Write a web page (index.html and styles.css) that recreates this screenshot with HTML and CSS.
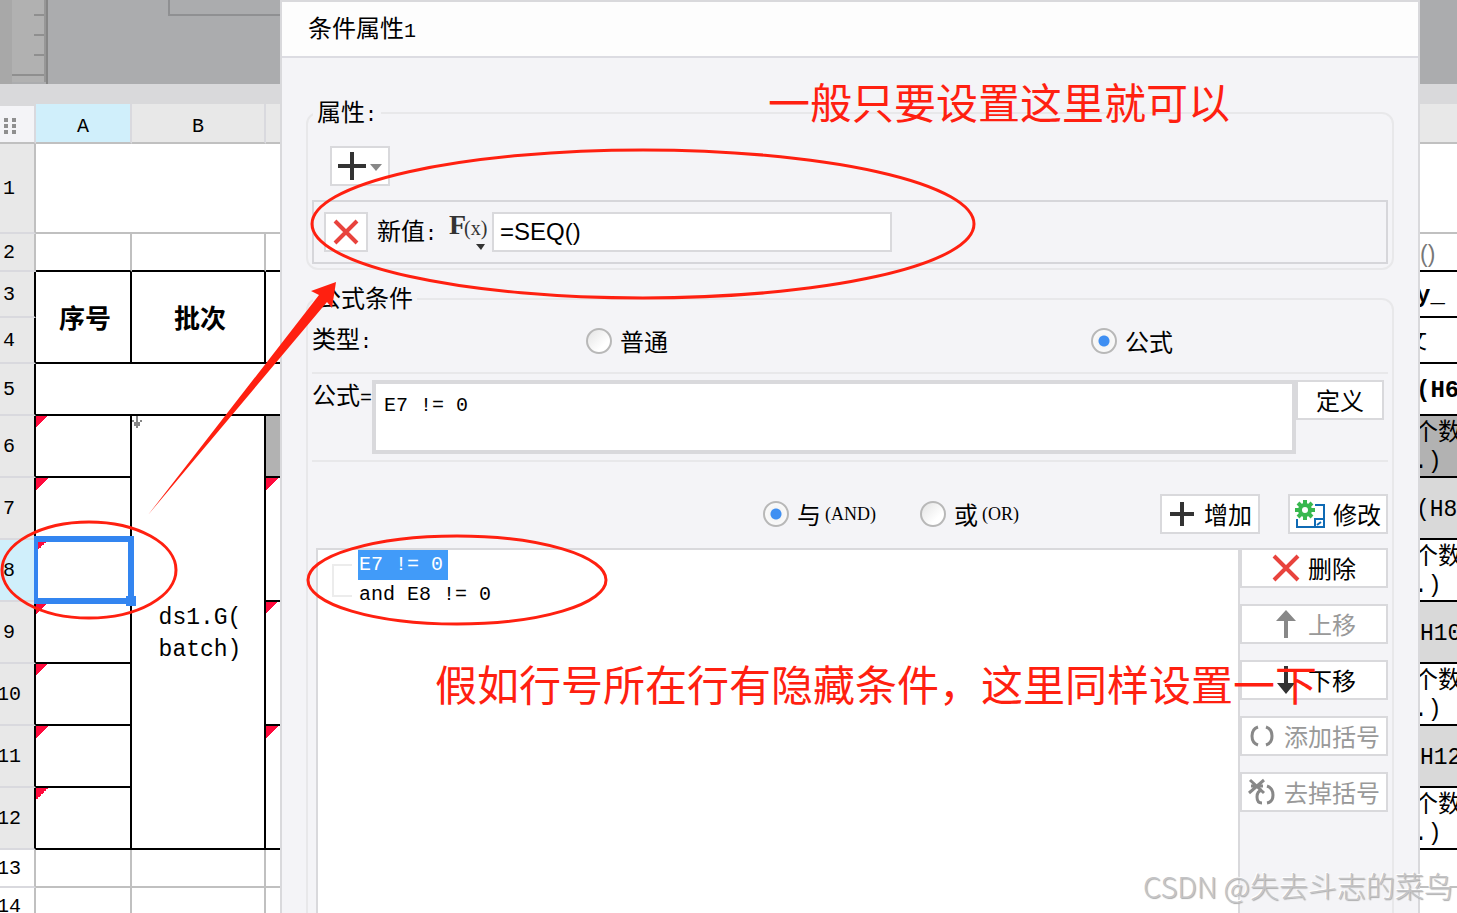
FILE: index.html
```html
<!DOCTYPE html>
<html lang="zh-CN">
<head>
    <meta charset="UTF-8">
    <meta name="viewport" content="width=device-width, initial-scale=1.0">
    <title>条件属性</title>
    <link rel="stylesheet" href="styles.css">
</head>
<body>
    <div class="workspace">
        <!-- Left part of the sheet -->
        <div class="sheet sheet-left">
            <div class="sheet-toolbar">
                <svg width="280" height="84" viewBox="0 0 280 84">
                    <rect x="0" y="0" width="12" height="84" fill="#a8a8a8"/>
                    <rect x="12" y="0" width="32" height="82" fill="#b1b1b1"/>
                    <rect x="44" y="0" width="2" height="82" fill="#979797"/>
                    <rect x="46" y="0" width="2" height="84" fill="#868686"/>
                    <path d="M34 15h10M34 35h10M34 55h10M12 75h32" stroke="#8f8f8f" stroke-width="2"/>
                    <path d="M169 0v15h111" fill="none" stroke="#8f9092" stroke-width="2"/>
                </svg>
            </div>
            <div class="sheet-band"></div>
            <table class="grid grid-left">
                <colgroup>
                    <col class="col-num">
                    <col class="col-a">
                    <col class="col-b">
                    <col class="col-c">
                </colgroup>
                <thead>
                    <tr class="row-head">
                        <th class="corner">
                            <svg width="12" height="16" viewBox="0 0 12 16" fill="#8f8f8f">
                                <path d="M0 0h4v4H0zM8 0h4v4H8zM0 6h4v4H0zM8 6h4v4H8zM0 12h4v4H0zM8 12h4v4H8z"/>
                            </svg>
                        </th>
                        <th class="active">A</th>
                        <th>B</th>
                        <th></th>
                    </tr>
                </thead>
                <tbody>
                    <tr class="row-title"><th>1</th><td colspan="3"></td></tr>
                    <tr class="row-slim above-frame"><th>2</th><td></td><td></td><td></td></tr>
                    <tr class="row-label framed">
                        <th>3</th>
                        <td rowspan="2" class="strong title-cell">序号</td>
                        <td rowspan="2" class="strong title-cell">批次</td>
                        <td rowspan="2"></td>
                    </tr>
                    <tr class="row-label framed"><th>4</th></tr>
                    <tr class="row-gap framed"><th>5</th><td colspan="3"></td></tr>
                    <tr class="row-data framed">
                        <th>6</th>
                        <td class="flag"></td>
                        <td rowspan="7" class="formula">
                            <svg class="expand" width="10" height="12" viewBox="0 0 10 12"><path d="M4 0h2v6h2V4h2v2H8v4H6v2H4v-2H2V6H0V4h2v2h2z" fill="#868686"/></svg>
                            ds1.G(<br>batch)
                        </td>
                        <td class="shade-dark"></td>
                    </tr>
                    <tr class="row-data framed"><th>7</th><td class="flag"></td><td rowspan="2" class="flag"></td></tr>
                    <tr class="row-data framed"><th class="active">8</th><td class="flag selected"><span class="selection"></span></td></tr>
                    <tr class="row-data framed"><th>9</th><td class="flag"></td><td rowspan="2" class="flag"></td></tr>
                    <tr class="row-data framed"><th>10</th><td class="flag"></td></tr>
                    <tr class="row-data framed"><th>11</th><td class="flag"></td><td rowspan="2" class="flag"></td></tr>
                    <tr class="row-data framed"><th>12</th><td class="flag"></td></tr>
                    <tr class="row-slim"><th class="blank">13</th><td></td><td></td><td></td></tr>
                    <tr class="row-slim"><th class="blank">14</th><td></td><td></td><td></td></tr>
                </tbody>
            </table>
        </div>

        <!-- Condition attribute dialog -->
        <div class="dialog" role="dialog" aria-labelledby="dialogTitle">
            <h1 class="dialog-title" id="dialogTitle">条件属性<span class="latin">1</span></h1>
            <div class="dialog-body">
                <fieldset class="group">
                    <legend>属性<span class="latin">:</span></legend>
                    <div class="attr-toolbar">
                        <button type="button" class="btn btn-add" aria-label="添加属性">
                            <svg width="48" height="32" viewBox="0 0 48 32">
                                <path d="M2 16h28M16 2v28" stroke="#333" stroke-width="4"/>
                                <path d="M34 14h12l-6 7z" fill="#888"/>
                            </svg>
                        </button>
                    </div>
                    <div class="attr-row">
                        <button type="button" class="btn btn-remove" aria-label="删除属性">
                            <svg width="28" height="28" viewBox="0 0 28 28"><path d="M3 3l22 22M25 3L3 25" stroke="#e8433d" stroke-width="4"/></svg>
                        </button>
                        <label for="newValue">新值<span class="latin">:</span></label>
                        <svg class="fx" width="38" height="40" viewBox="0 0 38 40" fill="#333">
                            <text x="0" y="22" class="fx-f">F</text>
                            <text x="15" y="23" class="fx-x">(x)</text>
                            <path d="M27 32h9l-4 6z"/>
                        </svg>
                        <input type="text" id="newValue" class="value-input" value="=SEQ()">
                    </div>
                </fieldset>

                <fieldset class="group">
                    <legend>公式条件</legend>
                    <div class="type-row">
                        <span>类型<span class="latin">:</span></span>
                        <label class="radio"><input type="radio" name="type">普通</label>
                        <label class="radio"><input type="radio" name="type" checked>公式</label>
                    </div>
                    <div class="formula-row">
                        <label for="formula">公式<span class="latin">=</span></label>
                        <textarea id="formula" class="formula-input" spellcheck="false">E7 != 0</textarea>
                        <button type="button" class="btn btn-define">定义</button>
                    </div>
                    <div class="join-row">
                        <div class="join-options">
                            <label class="radio"><input type="radio" name="join" checked>与<span class="small">(AND)</span></label>
                            <label class="radio"><input type="radio" name="join">或<span class="small">(OR)</span></label>
                        </div>
                        <button type="button" class="btn btn-wide">
                            <svg width="28" height="28" viewBox="0 0 28 28"><path d="M2 14h24M14 2v24" stroke="#333" stroke-width="4"/></svg>
                            增加
                        </button>
                        <button type="button" class="btn btn-wide">
                            <svg width="30" height="28" viewBox="0 0 30 28" fill="none">
                                <path d="M20 5h9v22H2v-8" stroke="#0f6ab4" stroke-width="2"/>
                                <path d="M20 27v-8h9M22 25l4-3" stroke="#0f6ab4" stroke-width="2"/>
                                <circle cx="10" cy="10" r="5" stroke="#38b84f" stroke-width="4"/>
                                <path d="M10 0v4M10 16v4M0 10h4M16 10h4M3 3l3 3M14 14l3 3M17 3l-3 3M6 14l-3 3" stroke="#38b84f" stroke-width="4"/>
                            </svg>
                            修改
                        </button>
                    </div>
                    <div class="condition-area">
                        <div class="condition-list">
                            <svg class="branch" width="20" height="34" viewBox="0 0 20 34"><path d="M20 1H1v31h19" fill="none" stroke="#ececec" stroke-width="2"/></svg>
                            <ul>
                                <li><span class="picked">E7 != 0</span></li>
                                <li><span>and E8 != 0</span></li>
                            </ul>
                        </div>
                        <div class="actions">
                            <button type="button" class="btn">
                                <svg width="28" height="28" viewBox="0 0 28 28"><path d="M2 2l24 24M26 2L2 26" stroke="#e8433d" stroke-width="4"/></svg>
                                删除
                            </button>
                            <button type="button" class="btn" disabled>
                                <svg width="28" height="28" viewBox="0 0 28 28"><path d="M14 0l10 11h-8v17h-4V11H4z" fill="#888"/></svg>
                                上移
                            </button>
                            <button type="button" class="btn">
                                <svg width="28" height="28" viewBox="0 0 28 28"><path d="M14 28l-9-11h7V0h4v17h7z" fill="#333"/></svg>
                                下移
                            </button>
                            <button type="button" class="btn" disabled>
                                <svg width="28" height="28" viewBox="0 0 28 28" fill="none" stroke="#888" stroke-width="3"><path d="M10 5q-6 2-6 9t6 9M18 5q6 2 6 9t-6 9"/></svg>
                                添加括号
                            </button>
                            <button type="button" class="btn" disabled>
                                <svg width="28" height="28" viewBox="0 0 28 28" fill="none" stroke="#888"><path d="M14 12q-5 1-5 7t5 6M19 8q6 2 6 9t-6 8" stroke-width="3"/><path d="M2 2l14 13M16 2L1 15M3 8h12" stroke-width="3"/></svg>
                                去掉括号
                            </button>
                        </div>
                    </div>
                </fieldset>
            </div>
        </div>

        <!-- Right part of the sheet -->
        <div class="sheet sheet-right">
            <div class="sheet-toolbar"></div>
            <div class="sheet-band"></div>
            <table class="grid grid-right">
                <thead>
                    <tr class="row-head"><th></th></tr>
                </thead>
                <tbody>
                    <tr class="row-title"><td></td></tr>
                    <tr class="row-slim above-frame"><td class="muted">()</td></tr>
                    <tr class="row-label framed"><td class="strong">y_</td></tr>
                    <tr class="row-label framed"><td class="clipped">文</td></tr>
                    <tr class="row-gap framed"><td class="strong">(H6</td></tr>
                    <tr class="row-data framed"><td class="shade-dark pair"><span class="cjk">个数</span><br>.)</td></tr>
                    <tr class="row-data framed"><td class="shade">(H8</td></tr>
                    <tr class="row-data framed"><td class="pair"><span class="cjk">个数</span><br>.)</td></tr>
                    <tr class="row-data framed"><td class="shade inset">H10</td></tr>
                    <tr class="row-data framed"><td class="pair"><span class="cjk">个数</span><br>.)</td></tr>
                    <tr class="row-data framed"><td class="shade inset">H12</td></tr>
                    <tr class="row-data framed"><td class="pair"><span class="cjk">个数</span><br>.)</td></tr>
                    <tr class="row-slim"><td></td></tr>
                    <tr class="row-slim"><td></td></tr>
                </tbody>
            </table>
        </div>

        <!-- Hand-drawn notes over the page -->
        <svg class="marks" width="1457" height="913" viewBox="0 0 1457 913">
            <g fill="none" stroke="#ff2010" stroke-width="3">
                <ellipse cx="643" cy="224" rx="331" ry="74"/>
                <ellipse cx="89" cy="570" rx="87" ry="48"/>
                <ellipse cx="457" cy="580" rx="149" ry="44"/>
            </g>
            <path d="M148 515L319 295L311 291L336 282L332 308L327 302Z" fill="#ff2010"/>
        </svg>
        <p class="note note-top">一般只要设置这里就可以</p>
        <p class="note note-bottom">假如行号所在行有隐藏条件，这里同样设置一下</p>
        <p class="watermark">CSDN @失去斗志的菜鸟</p>
    </div>
</body>
</html>
```
FILE: styles.css
```css
:root {
    --line: #d9d9dc;
    --grid-line: #c0c0c0;
    --panel: #f4f4f7;
    --red: #ff2010;
    --blue: #3385f0;
    --cjk: "Noto Sans CJK SC", sans-serif;
    --mono: "Liberation Mono", "Noto Sans CJK SC", monospace;
}

* {
    margin: 0;
    padding: 0;
    box-sizing: border-box;
}

body {
    font-family: var(--cjk);
    font-size: 24px;
    line-height: 28px;
    color: #000;
    background-color: #fff;
    overflow: hidden;
}

.workspace {
    position: relative;
    display: flex;
    height: 100vh;
    overflow: hidden;
}

/* Sheet */
.sheet {
    flex: none;
    overflow: hidden;
}

.sheet-left {
    width: 280px;
}

.sheet-right {
    width: 37px;
}

.sheet-toolbar {
    height: 84px;
    background-color: #abacae;
}

.sheet-toolbar svg {
    display: block;
}

.sheet-band {
    height: 20px;
    background-color: #d9d9db;
}

.grid {
    table-layout: fixed;
    border-collapse: separate;
    border-spacing: 0;
    font-family: var(--mono);
    font-size: 20px;
}

/* Both tables are scrolled a little to the left */
.grid-left {
    width: 416px;
    margin-left: -16px;
}

.grid-right {
    width: 120px;
    margin-left: -18px;
}

.col-num {
    width: 52px;
}

.col-a {
    width: 96px;
}

.col-b,
.col-c {
    width: 134px;
}

.grid th,
.grid td {
    position: relative;
    text-align: center;
    vertical-align: middle;
    font-weight: normal;
    border-right: 2px solid var(--grid-line);
    border-bottom: 2px solid var(--grid-line);
}

.grid th {
    padding-top: 2px;
    background-color: #e8e8e8;
}

.grid tbody th {
    border-bottom-color: #d9d9de;
}

.grid thead th {
    padding-top: 8px;
    border-right-color: #d9d9de;
}

.grid th.active {
    background-color: #d0effb;
}

.grid thead th.corner {
    padding-top: 4px;
    padding-left: 2px;
    background-color: var(--panel);
    border-top: 2px solid #d9d9db;
}

.grid th.blank {
    background-color: #fff;
}

.corner svg {
    display: block;
    margin: 0 auto;
}

.row-head {
    height: 40px;
}

.row-title {
    height: 90px;
}

.row-slim {
    height: 38px;
}

.row-label {
    height: 46px;
}

.row-gap {
    height: 52px;
}

.row-data {
    height: 62px;
}

.grid .above-frame td {
    border-bottom-color: #000;
}

.grid .framed td {
    border-color: #000;
}

.grid .framed th {
    border-right-color: #000;
}

.grid td.strong {
    font-weight: bold;
    font-size: 24px;
}

.grid td.title-cell {
    padding: 8px 0 0 4px;
    font-size: 26px;
}

.grid td.formula {
    padding: 4px 0 0 4px;
    font-size: 23px;
    line-height: 32px;
}

.expand {
    position: absolute;
    top: 0;
    left: 0;
}

.flag {
    background-image: linear-gradient(135deg, #ff0a3c 50%, transparent 50%);
    background-size: 12px 12px;
    background-repeat: no-repeat;
}

.shade {
    background-color: #d9d9d9;
}

.shade-dark {
    background-color: #b2b2b2;
}

.selection {
    position: absolute;
    z-index: 1;
    top: -4px;
    right: -4px;
    bottom: -4px;
    left: -2px;
    border: 6px solid var(--blue);
    border-left-width: 4px;
}

.selection::after {
    content: "";
    position: absolute;
    right: -8px;
    bottom: -8px;
    width: 10px;
    height: 10px;
    background-color: var(--blue);
}

.grid-right td {
    padding: 4px 0 0 14px;
    text-align: left;
    font-size: 23px;
    line-height: 30px;
    white-space: nowrap;
}

.grid-right td.pair {
    padding: 0 0 0 12px;
    line-height: 28px;
    vertical-align: bottom;
}

.grid-right td.inset,
.grid-right td.muted {
    padding-left: 18px;
}

.grid-right td.muted {
    color: #777;
    font-family: "Liberation Sans", sans-serif;
}

.grid-right td.clipped {
    padding-left: 2px;
}

.cjk {
    font-family: var(--cjk);
    font-size: 24px;
    line-height: 20px;
}

/* Dialog */
.dialog {
    flex: 1;
    min-width: 0;
    overflow: hidden;
    background-color: var(--panel);
    border: 2px solid var(--line);
    border-bottom: none;
}

.dialog-title {
    height: 56px;
    padding: 0 26px;
    line-height: 50px;
    font-size: 24px;
    font-weight: normal;
    background-color: #fdfdfd;
    border-bottom: 2px solid #dcdce2;
}

.latin {
    font-family: var(--mono);
    font-size: 20px;
}

.small {
    margin-left: 4px;
    font-family: "Liberation Serif", serif;
    font-size: 18px;
}

.dialog-body {
    padding: 41px 24px 0;
}

.group {
    min-width: 0;
    margin-bottom: 15px;
    padding: 0 4px 4px;
    border: 2px solid #e8e8ea;
    border-radius: 12px;
}

.group legend {
    height: 28px;
    margin-left: 1px;
    padding: 0 4px;
    line-height: 24px;
}

.btn {
    display: flex;
    flex: none;
    align-items: center;
    justify-content: center;
    gap: 8px;
    height: 40px;
    font-family: var(--cjk);
    font-size: 24px;
    line-height: 28px;
    color: #000;
    background-color: #fff;
    border: 2px solid var(--line);
    cursor: pointer;
}

.btn:disabled {
    color: #999;
    cursor: default;
}

.btn svg {
    flex: none;
}

.attr-toolbar {
    padding: 19px 18px 14px;
}

.btn-add {
    width: 60px;
}

.attr-row {
    display: flex;
    align-items: center;
    height: 64px;
    padding: 0 10px;
    border: 2px solid #d6d6da;
}

.btn-remove {
    width: 44px;
    margin-right: 9px;
}

.fx {
    margin: 0 5px 0 12px;
}

.fx-f {
    font: bold 28px "Liberation Serif", serif;
}

.fx-x {
    font: 20px "Liberation Serif", serif;
}

.value-input {
    width: 400px;
    height: 40px;
    padding: 0 6px;
    font-family: "Liberation Sans", sans-serif;
    font-size: 24px;
    color: #000;
    background-color: #fff;
    border: 2px solid var(--line);
}

.radio {
    display: flex;
    align-items: center;
}

.radio input {
    appearance: none;
    width: 26px;
    height: 26px;
    margin-right: 8px;
    border: 2px solid #b8b8b8;
    border-radius: 50%;
    background-image: linear-gradient(135deg, #e4e4e4, #fff 70%);
}

.radio input:checked {
    background-image: radial-gradient(circle, #3f8ff2 0 5px, #f4f4f4 6px, #fff);
}

.type-row {
    display: grid;
    grid-template-columns: 274px 1.7fr 1fr;
    align-items: center;
    height: 61px;
    padding-bottom: 4px;
    border-bottom: 2px solid #e8e8ea;
}

.formula-row {
    display: flex;
    align-items: flex-start;
    height: 88px;
    padding: 6px 4px 0 0;
    border-bottom: 2px solid #e8e8ea;
}

.formula-input {
    flex: 1;
    min-width: 0;
    height: 74px;
    padding: 8px;
    font-family: var(--mono);
    font-size: 20px;
    line-height: 28px;
    color: #000;
    background-color: #fff;
    border: 4px solid var(--line);
    resize: none;
}

.btn-define {
    width: 88px;
}

.join-row {
    display: flex;
    align-items: center;
    justify-content: flex-end;
    gap: 28px;
    padding: 32px 0 14px;
}

.join-options {
    display: flex;
    gap: 44px;
    margin-right: 113px;
}

.btn-wide {
    width: 100px;
}

.condition-area {
    display: flex;
    padding-left: 4px;
}

.condition-list {
    position: relative;
    flex: 1;
    min-height: 480px;
    padding-left: 40px;
    background-color: #fff;
    border: 2px solid var(--line);
}

.condition-list ul {
    list-style: none;
}

.condition-list li {
    height: 30px;
    font-family: var(--mono);
    font-size: 20px;
    line-height: 30px;
}

.condition-list li span {
    display: inline-block;
    padding: 0 5px 0 1px;
}

.condition-list .picked {
    color: #fff;
    background-color: #419bf9;
}

.branch {
    position: absolute;
    top: 14px;
    left: 14px;
}

.actions {
    display: flex;
    flex-direction: column;
    gap: 16px;
    width: 148px;
}

/* Notes */
.marks {
    position: absolute;
    top: 0;
    left: 0;
    z-index: 2;
    pointer-events: none;
}

.note {
    position: absolute;
    z-index: 2;
    font-size: 42px;
    line-height: 48px;
    color: var(--red);
    white-space: nowrap;
}

.note-top {
    top: 77px;
    left: 768px;
}

.note-bottom {
    top: 659px;
    left: 435px;
}

.watermark {
    position: absolute;
    z-index: 3;
    right: 4px;
    bottom: 12px;
    font-size: 29px;
    font-weight: 300;
    line-height: 32px;
    color: #c4c4c6;
    text-shadow: 1px 1px 1px #aaa, -1px -1px 0 #fff;
    white-space: nowrap;
}
```
